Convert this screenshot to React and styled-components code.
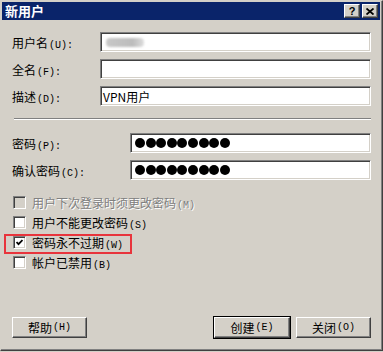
import React from 'react'
import styled, { createGlobalStyle, css } from 'styled-components'

const GlobalStyle = createGlobalStyle`
    html, body {
        margin: 0;
        padding: 0;
        background: #d4d0c8;
    }
    body {
        font-family: "Noto Sans CJK SC", "Liberation Sans", sans-serif;
        font-size: 12px;
        color: #000;
    }
`

const raised = css`
    border-top: 1px solid #fff;
    border-left: 1px solid #fff;
    border-right: 1px solid #404040;
    border-bottom: 1px solid #404040;
    box-shadow: inset -1px -1px #808080;
`

const sunken = css`
    border-top: 1px solid #808080;
    border-left: 1px solid #808080;
    border-right: 1px solid #fff;
    border-bottom: 1px solid #fff;
    box-shadow: inset 1px 1px #404040, inset -1px -1px #d4d0c8;
`

const Window = styled.div`
    width: 383px;
    height: 351px;
    box-sizing: border-box;
    background: #d4d0c8;
    border-top: 1px solid #d4d0c8;
    border-left: 1px solid #d4d0c8;
    border-right: 1px solid #404040;
    border-bottom: 1px solid #404040;
    box-shadow: inset -1px -1px #808080;
    padding: 1px 2px 2px 1px;
    display: flex;
    flex-direction: column;
`

const TitleBar = styled.div`
    height: 18px;
    background: #0a246a;
    display: flex;
    align-items: center;
    justify-content: space-between;
    padding: 0 2px 0 3px;
`

const Title = styled.span`
    color: #fff;
    font-weight: bold;
    font-size: 13px;
    line-height: 18px;
`

const TitleButtons = styled.div`
    display: flex;
    gap: 2px;
`

const TitleButton = styled.div`
    ${raised};
    width: 14px;
    height: 12px;
    background: #d4d0c8;
    display: flex;
    align-items: center;
    justify-content: center;
    font-family: "Liberation Sans", sans-serif;
    font-weight: bold;
    font-size: 11px;
    line-height: 1;
`

const Body = styled.div`
    flex: 1;
    display: flex;
    flex-direction: column;
    padding: 12px 9px 10px 10px;
`

const FieldGrid = styled.div`
    display: grid;
    grid-template-columns: ${p => p.labelWidth}px 1fr;
    row-gap: 7px;
    align-items: center;
`

const Label = styled.span`
    white-space: nowrap;
`

const Key = styled.span`
    font-family: "Liberation Mono", monospace;
    font-size: 10px;
    margin-left: 1px;
`

const TextBox = styled.div`
    ${sunken};
    height: 18px;
    background: #fff;
    display: flex;
    align-items: center;
    padding: 0 2px;
    overflow: hidden;
`

const Blurred = styled.span`
    width: 38px;
    height: 9px;
    margin-left: 3px;
    border-radius: 4px;
    background: linear-gradient(90deg, #c8c8c8, #bcbcbc 70%, #dedede);
    filter: blur(1px);
`

const Dots = styled.div`
    display: flex;
    gap: 0.6px;
    padding-left: 2px;
`

const Dot = styled.span`
    width: 10px;
    height: 10px;
    border-radius: 50%;
    background: #000;
`

const Separator = styled.div`
    height: 0;
    border-top: 1px solid #808080;
    border-bottom: 1px solid #fff;
    margin: 12px 0 13px 2px;
`

const CheckList = styled.div`
    display: flex;
    flex-direction: column;
    margin-top: 12px;
`

const CheckRow = styled.div`
    position: relative;
    align-self: flex-start;
    height: 20px;
    display: flex;
    align-items: center;
    gap: 6px;
    padding-left: 1px;
    color: ${p => (p.disabled ? '#808080' : '#000')};
    text-shadow: ${p => (p.disabled ? '1px 1px #fff' : 'none')};
    ${p => p.highlight && css`
        &::after {
            content: '';
            position: absolute;
            left: -8px;
            right: -9px;
            top: 2px;
            bottom: -2px;
            border: 2px solid #e8343c;
        }
    `}
`

const Box = styled.span`
    ${sunken};
    width: 9px;
    height: 9px;
    padding: 1px;
    background: ${p => (p.disabled ? '#d4d0c8' : '#fff')};
    display: flex;
    align-items: center;
    justify-content: center;
`

const ButtonRow = styled.div`
    margin-top: auto;
    display: flex;
    justify-content: space-between;
    align-items: center;
`

const ButtonGroup = styled.div`
    display: flex;
    gap: 6px;
`

const Button = styled.div`
    ${raised};
    width: 73px;
    height: 19px;
    background: #d4d0c8;
    display: flex;
    align-items: center;
    justify-content: center;
    ${p => p.primary && css`
        outline: 1px solid #000;
        width: 74px;
    `}
`

const LabelText = ({ text, accel }) => (
    <Label>
        {text}<Key>({accel}):</Key>
    </Label>
)

const checks = [
    { text: '用户下次登录时须更改密码', accel: 'M', disabled: true },
    { text: '用户不能更改密码', accel: 'S' },
    { text: '密码永不过期', accel: 'W', checked: true, highlight: true },
    { text: '帐户已禁用', accel: 'B' },
]

const Password = () => (
    <TextBox>
        <Dots>
            {Array.from({ length: 9 }).map((_, i) => <Dot key={i} />)}
        </Dots>
    </TextBox>
)

export default function App() {
    return (
        <>
            <GlobalStyle />
            <Window>
                <TitleBar>
                    <Title>新用户</Title>
                    <TitleButtons>
                        <TitleButton>?</TitleButton>
                        <TitleButton>
                            <svg width="8" height="7" viewBox="0 0 8 7">
                                <path d="M0.5 0.5 L7.5 6.5 M7.5 0.5 L0.5 6.5" stroke="#000" strokeWidth="1.8" />
                            </svg>
                        </TitleButton>
                    </TitleButtons>
                </TitleBar>
                <Body>
                    <FieldGrid labelWidth={88}>
                        <LabelText text="用户名" accel="U" />
                        <TextBox><Blurred /></TextBox>
                        <LabelText text="全名" accel="F" />
                        <TextBox />
                        <LabelText text="描述" accel="D" />
                        <TextBox>VPN用户</TextBox>
                    </FieldGrid>
                    <Separator />
                    <FieldGrid labelWidth={118}>
                        <LabelText text="密码" accel="P" />
                        <Password />
                        <LabelText text="确认密码" accel="C" />
                        <Password />
                    </FieldGrid>
                    <CheckList>
                        {checks.map(c => (
                            <CheckRow key={c.accel} disabled={c.disabled} highlight={c.highlight}>
                                <Box disabled={c.disabled}>
                                    {c.checked && (
                                        <svg width="7" height="7" viewBox="0 0 7 7">
                                            <path d="M0.5 3 L2.5 5.2 L6.5 1" fill="none" stroke="#000" strokeWidth="1.8" />
                                        </svg>
                                    )}
                                </Box>
                                <span>{c.text}<Key>({c.accel})</Key></span>
                            </CheckRow>
                        ))}
                    </CheckList>
                    <ButtonRow>
                        <Button>帮助<Key>(H)</Key></Button>
                        <ButtonGroup>
                            <Button primary>创建<Key>(E)</Key></Button>
                            <Button>关闭<Key>(O)</Key></Button>
                        </ButtonGroup>
                    </ButtonRow>
                </Body>
            </Window>
        </>
    )
}
